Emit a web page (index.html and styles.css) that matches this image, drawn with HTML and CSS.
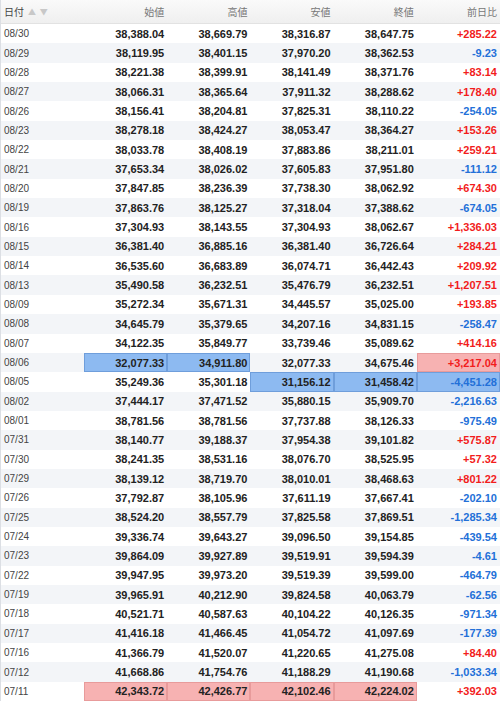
FILE: index.html
```html
<!DOCTYPE html>
<html lang="ja">
<head>
<meta charset="utf-8">
<title>日経平均 日足</title>
<link rel="stylesheet" href="styles.css">
</head>
<body>
<div class="grid">
  <div class="row head">
    <div class="c date">日付 <span class="sort">▲ ▼</span></div>
    <div class="c">始値</div>
    <div class="c">高値</div>
    <div class="c">安値</div>
    <div class="c">終値</div>
    <div class="c">前日比</div>
  </div>
  <div class="row"><div class="c date">08/30</div><div class="c n">38,388.04</div><div class="c n">38,669.79</div><div class="c n">38,316.87</div><div class="c n">38,647.75</div><div class="c n up">+285.22</div></div>
  <div class="row"><div class="c date">08/29</div><div class="c n">38,119.95</div><div class="c n">38,401.15</div><div class="c n">37,970.20</div><div class="c n">38,362.53</div><div class="c n dn">-9.23</div></div>
  <div class="row"><div class="c date">08/28</div><div class="c n">38,221.38</div><div class="c n">38,399.91</div><div class="c n">38,141.49</div><div class="c n">38,371.76</div><div class="c n up">+83.14</div></div>
  <div class="row"><div class="c date">08/27</div><div class="c n">38,066.31</div><div class="c n">38,365.64</div><div class="c n">37,911.32</div><div class="c n">38,288.62</div><div class="c n up">+178.40</div></div>
  <div class="row"><div class="c date">08/26</div><div class="c n">38,156.41</div><div class="c n">38,204.81</div><div class="c n">37,825.31</div><div class="c n">38,110.22</div><div class="c n dn">-254.05</div></div>
  <div class="row"><div class="c date">08/23</div><div class="c n">38,278.18</div><div class="c n">38,424.27</div><div class="c n">38,053.47</div><div class="c n">38,364.27</div><div class="c n up">+153.26</div></div>
  <div class="row"><div class="c date">08/22</div><div class="c n">38,033.78</div><div class="c n">38,408.19</div><div class="c n">37,883.86</div><div class="c n">38,211.01</div><div class="c n up">+259.21</div></div>
  <div class="row"><div class="c date">08/21</div><div class="c n">37,653.34</div><div class="c n">38,026.02</div><div class="c n">37,605.83</div><div class="c n">37,951.80</div><div class="c n dn">-111.12</div></div>
  <div class="row"><div class="c date">08/20</div><div class="c n">37,847.85</div><div class="c n">38,236.39</div><div class="c n">37,738.30</div><div class="c n">38,062.92</div><div class="c n up">+674.30</div></div>
  <div class="row"><div class="c date">08/19</div><div class="c n">37,863.76</div><div class="c n">38,125.27</div><div class="c n">37,318.04</div><div class="c n">37,388.62</div><div class="c n dn">-674.05</div></div>
  <div class="row"><div class="c date">08/16</div><div class="c n">37,304.93</div><div class="c n">38,143.55</div><div class="c n">37,304.93</div><div class="c n">38,062.67</div><div class="c n up">+1,336.03</div></div>
  <div class="row"><div class="c date">08/15</div><div class="c n">36,381.40</div><div class="c n">36,885.16</div><div class="c n">36,381.40</div><div class="c n">36,726.64</div><div class="c n up">+284.21</div></div>
  <div class="row"><div class="c date">08/14</div><div class="c n">36,535.60</div><div class="c n">36,683.89</div><div class="c n">36,074.71</div><div class="c n">36,442.43</div><div class="c n up">+209.92</div></div>
  <div class="row"><div class="c date">08/13</div><div class="c n">35,490.58</div><div class="c n">36,232.51</div><div class="c n">35,476.79</div><div class="c n">36,232.51</div><div class="c n up">+1,207.51</div></div>
  <div class="row"><div class="c date">08/09</div><div class="c n">35,272.34</div><div class="c n">35,671.31</div><div class="c n">34,445.57</div><div class="c n">35,025.00</div><div class="c n up">+193.85</div></div>
  <div class="row"><div class="c date">08/08</div><div class="c n">34,645.79</div><div class="c n">35,379.65</div><div class="c n">34,207.16</div><div class="c n">34,831.15</div><div class="c n dn">-258.47</div></div>
  <div class="row"><div class="c date">08/07</div><div class="c n">34,122.35</div><div class="c n">35,849.77</div><div class="c n">33,739.46</div><div class="c n">35,089.62</div><div class="c n up">+414.16</div></div>
  <div class="row"><div class="c date">08/06</div><div class="c n hb">32,077.33</div><div class="c n hb">34,911.80</div><div class="c n">32,077.33</div><div class="c n">34,675.46</div><div class="c n up hr">+3,217.04</div></div>
  <div class="row"><div class="c date">08/05</div><div class="c n">35,249.36</div><div class="c n">35,301.18</div><div class="c n hb">31,156.12</div><div class="c n hb">31,458.42</div><div class="c n dn hb">-4,451.28</div></div>
  <div class="row"><div class="c date">08/02</div><div class="c n">37,444.17</div><div class="c n">37,471.52</div><div class="c n">35,880.15</div><div class="c n">35,909.70</div><div class="c n dn">-2,216.63</div></div>
  <div class="row"><div class="c date">08/01</div><div class="c n">38,781.56</div><div class="c n">38,781.56</div><div class="c n">37,737.88</div><div class="c n">38,126.33</div><div class="c n dn">-975.49</div></div>
  <div class="row"><div class="c date">07/31</div><div class="c n">38,140.77</div><div class="c n">39,188.37</div><div class="c n">37,954.38</div><div class="c n">39,101.82</div><div class="c n up">+575.87</div></div>
  <div class="row"><div class="c date">07/30</div><div class="c n">38,241.35</div><div class="c n">38,531.16</div><div class="c n">38,076.70</div><div class="c n">38,525.95</div><div class="c n up">+57.32</div></div>
  <div class="row"><div class="c date">07/29</div><div class="c n">38,139.12</div><div class="c n">38,719.70</div><div class="c n">38,010.01</div><div class="c n">38,468.63</div><div class="c n up">+801.22</div></div>
  <div class="row"><div class="c date">07/26</div><div class="c n">37,792.87</div><div class="c n">38,105.96</div><div class="c n">37,611.19</div><div class="c n">37,667.41</div><div class="c n dn">-202.10</div></div>
  <div class="row"><div class="c date">07/25</div><div class="c n">38,524.20</div><div class="c n">38,557.79</div><div class="c n">37,825.58</div><div class="c n">37,869.51</div><div class="c n dn">-1,285.34</div></div>
  <div class="row"><div class="c date">07/24</div><div class="c n">39,336.74</div><div class="c n">39,643.27</div><div class="c n">39,096.50</div><div class="c n">39,154.85</div><div class="c n dn">-439.54</div></div>
  <div class="row"><div class="c date">07/23</div><div class="c n">39,864.09</div><div class="c n">39,927.89</div><div class="c n">39,519.91</div><div class="c n">39,594.39</div><div class="c n dn">-4.61</div></div>
  <div class="row"><div class="c date">07/22</div><div class="c n">39,947.95</div><div class="c n">39,973.20</div><div class="c n">39,519.39</div><div class="c n">39,599.00</div><div class="c n dn">-464.79</div></div>
  <div class="row"><div class="c date">07/19</div><div class="c n">39,965.91</div><div class="c n">40,212.90</div><div class="c n">39,824.58</div><div class="c n">40,063.79</div><div class="c n dn">-62.56</div></div>
  <div class="row"><div class="c date">07/18</div><div class="c n">40,521.71</div><div class="c n">40,587.63</div><div class="c n">40,104.22</div><div class="c n">40,126.35</div><div class="c n dn">-971.34</div></div>
  <div class="row"><div class="c date">07/17</div><div class="c n">41,416.18</div><div class="c n">41,466.45</div><div class="c n">41,054.72</div><div class="c n">41,097.69</div><div class="c n dn">-177.39</div></div>
  <div class="row"><div class="c date">07/16</div><div class="c n">41,366.79</div><div class="c n">41,520.07</div><div class="c n">41,220.65</div><div class="c n">41,275.08</div><div class="c n up">+84.40</div></div>
  <div class="row"><div class="c date">07/12</div><div class="c n">41,668.86</div><div class="c n">41,754.76</div><div class="c n">41,188.29</div><div class="c n">41,190.68</div><div class="c n dn">-1,033.34</div></div>
  <div class="row"><div class="c date">07/11</div><div class="c n hr">42,343.72</div><div class="c n hr">42,426.77</div><div class="c n hr">42,102.46</div><div class="c n hr">42,224.02</div><div class="c n up">+392.03</div></div>
</div>
</body>
</html>
```
FILE: styles.css
```css
html, body {
  margin: 0;
  padding: 0;
  background: #fff;
}
body {
  font-family: "Liberation Sans", "Noto Sans CJK JP", sans-serif;
  color: #222;
}
.grid {
  border-left: 1px solid #dcdfe4;
  width: 499px;
}
.row {
  display: grid;
  grid-template-columns: 83px repeat(5, 1fr);
  height: 19.35px;
  align-items: stretch;
}
.row:nth-child(odd) {
  background: #f3f5f8;
}
.row.head {
  height: 24px;
  background: linear-gradient(#fafafa, #efefef);
  border-bottom: 1px solid #e2e2e2;
  box-sizing: border-box;
  color: #777;
  font-size: 10px;
}
.c {
  display: flex;
  align-items: center;
  justify-content: flex-end;
  padding: 0 3px 0 3px;
  box-sizing: border-box;
}
.head .c {
  font-family: "Noto Sans CJK JP", sans-serif;
}
.c.date {
  justify-content: flex-start;
  font-size: 10px;
  color: #444;
  padding-left: 3px;
}
.sort {
  color: #c8c8c8;
  font-size: 8px;
  margin-left: 4px;
  letter-spacing: 1px;
}
.c.n {
  font-size: 11px;
  font-weight: bold;
  color: #222;
}
.c.n.up {
  color: #f21c1c;
}
.c.n.dn {
  color: #2370d8;
}
.hb {
  background: #8dbaf1;
  box-shadow: inset 0 0 0 1px #6f9edb;
}
.hr {
  background: #f7b2b2;
  box-shadow: inset 0 0 0 1px #e89b9b;
}
```
